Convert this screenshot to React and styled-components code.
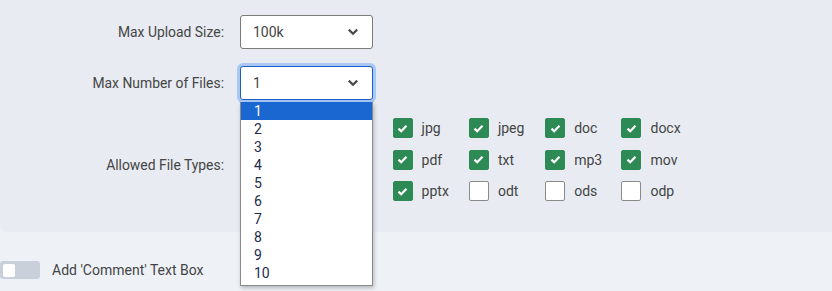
import React from "react";
import styled, { createGlobalStyle } from "styled-components";

const Global = createGlobalStyle`
  html, body { margin: 0; padding: 0; }
  body {
    background: #eef2f7;
    font-family: Roboto, "Noto Sans", Arial, sans-serif;
    color: #444;
    width: 832px;
    height: 291px;
    overflow: hidden;
  }
`;

const Panel = styled.div`
  position: relative;
  background: #e8ecf2;
  height: 232px;
  box-sizing: border-box;
  padding-top: 15px;
  border-bottom-left-radius: 6px;
  display: flex;
  flex-direction: column;
  gap: 17px;
`;

const Row = styled.div`
  display: grid;
  grid-template-columns: 224px auto;
  column-gap: 16px;
  align-items: ${(p) => (p.$top ? "start" : "center")};
`;

const Label = styled.div`
  text-align: right;
  font-size: 13.9px;
  color: #454545;
  padding-top: ${(p) => p.$pad || 0}px;
`;

const SelectBox = styled.div`
  position: relative;
  width: 133px;
  height: 34px;
  box-sizing: border-box;
  background: #fff;
  border: 1px solid ${(p) => (p.$focus ? "#1d5cc9" : "#7b7b7b")};
  border-radius: 3px;
  box-shadow: ${(p) => (p.$focus ? "0 0 0 3px #a9c9f4" : "none")};
  display: flex;
  align-items: center;
  padding: 0 13px 0 12px;
  font-size: 14px;
  color: #444;
`;

const Value = styled.span`
  flex: 1;
`;

const Chevron = () => (
  <svg width="12" height="8" viewBox="0 0 12 8">
    <path d="M1.8 1.6 L6 5.8 L10.2 1.6" fill="none" stroke="#4a4a4a" strokeWidth="2.2" />
  </svg>
);

const Dropdown = styled.ul`
  position: absolute;
  left: 240px;
  top: 102px;
  width: 133px;
  box-sizing: border-box;
  margin: 0;
  padding: 0 0 3px;
  list-style: none;
  background: #fff;
  border-left: 1px solid #8a8a8a;
  border-right: 1px solid #8a8a8a;
  border-bottom: 1px solid #8a8a8a;
  box-shadow: 1px 2px 4px rgba(0, 0, 0, 0.25);
  z-index: 5;
`;

const Option = styled.li`
  height: 18px;
  line-height: 18px;
  padding-left: 13px;
  font-size: 14px;
  color: ${(p) => (p.$active ? "#fff" : "#1e2b4a")};
  background: ${(p) => (p.$active ? "#1a67d2" : "transparent")};
`;

const CheckGrid = styled.div`
  display: grid;
  grid-template-columns: repeat(6, 76.3px);
  grid-auto-rows: 20px;
  row-gap: 11.5px;
  padding-top: 1px;
`;

const CheckItem = styled.label`
  display: flex;
  align-items: center;
  gap: 9px;
  font-size: 14px;
  color: #444;
`;

const Box = styled.span`
  width: 20px;
  height: 20px;
  box-sizing: border-box;
  border-radius: 2px;
  display: flex;
  align-items: center;
  justify-content: center;
  background: ${(p) => (p.$on ? "#2e8a55" : "#fff")};
  border: 1px solid ${(p) => (p.$on ? "#2e8a55" : "#8a8a8a")};
`;

const Tick = () => (
  <svg width="11" height="9" viewBox="0 0 11 9">
    <path d="M1.5 4.6 L4.2 7.2 L9.5 1.8" fill="none" stroke="#fff" strokeWidth="2.2" />
  </svg>
);

const Bottom = styled.div`
  display: flex;
  align-items: center;
  gap: 12px;
  padding-top: 29px;
  font-size: 14px;
  color: #444;
`;

const Toggle = styled.span`
  width: 40px;
  height: 18px;
  border-radius: 3px;
  background: #c9d0da;
  display: flex;
  align-items: center;
  padding-left: 3px;
  box-sizing: border-box;
`;

const Knob = styled.span`
  width: 12px;
  height: 13px;
  border-radius: 2px;
  background: #fff;
`;

const types = [
  ["gif", false], ["png", false], ["jpg", true], ["jpeg", true], ["doc", true], ["docx", true],
  ["bmp", false], ["svg", false], ["pdf", true], ["txt", true], ["mp3", true], ["mov", true],
  ["xls", false], ["ppt", false], ["pptx", true], ["odt", false], ["ods", false], ["odp", false],
];

export default function App() {
  return (
    <>
      <Global />
      <Panel>
        <Row>
          <Label>Max Upload Size:</Label>
          <SelectBox>
            <Value>100k</Value>
            <Chevron />
          </SelectBox>
        </Row>
        <Row>
          <Label>Max Number of Files:</Label>
          <SelectBox $focus>
            <Value>1</Value>
            <Chevron />
          </SelectBox>
        </Row>
        <Row $top>
          <Label $pad={40}>Allowed File Types:</Label>
          <CheckGrid>
            {types.map(([name, on]) => (
              <CheckItem key={name}>
                <Box $on={on}>{on && <Tick />}</Box>
                {name}
              </CheckItem>
            ))}
          </CheckGrid>
        </Row>
        <Dropdown>
          {Array.from({ length: 10 }, (_, i) => (
            <Option key={i} $active={i === 0}>{i + 1}</Option>
          ))}
        </Dropdown>
      </Panel>
      <Bottom>
        <Toggle><Knob /></Toggle>
        Add 'Comment' Text Box
      </Bottom>
    </>
  );
}
